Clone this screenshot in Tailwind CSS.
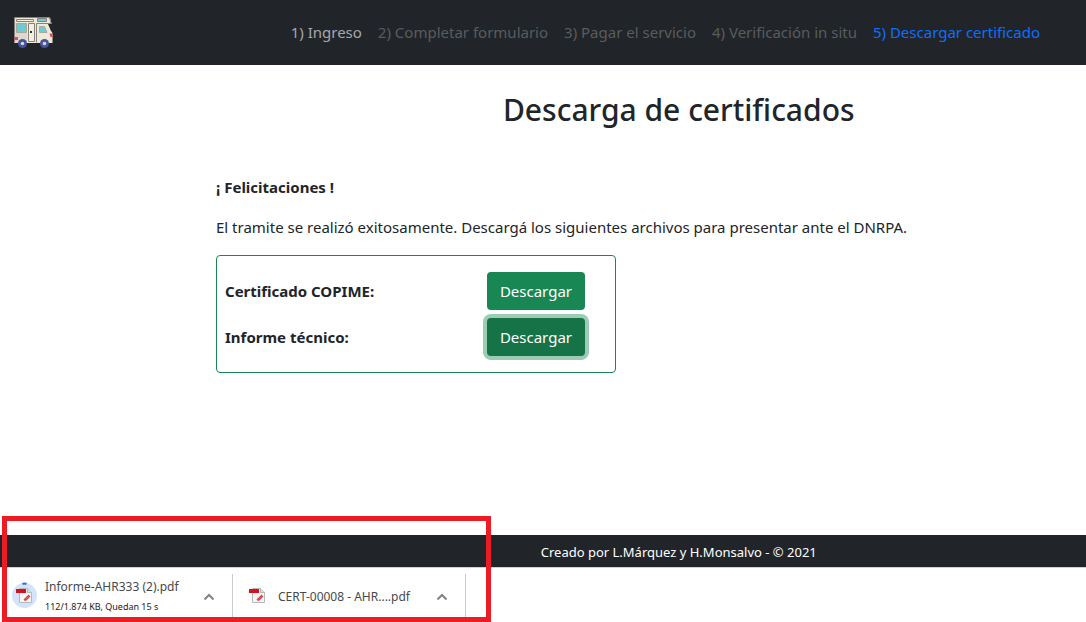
<!DOCTYPE html>
<html lang="es">
<head>
<meta charset="utf-8">
<meta name="viewport" content="width=device-width, initial-scale=1">
<title>Descarga de certificados</title>
<script src="https://cdn.jsdelivr.net/npm/@tailwindcss/browser@4"></script>
</head>
<body class="relative flex min-h-screen flex-col bg-white font-['Noto_Sans',sans-serif] text-[15px] leading-6 text-[#212529]">
  <header class="flex h-[65px] items-center justify-between bg-[#212529] pr-[46px] pb-px pl-[13px]">
    <a href="#" aria-label="Inicio">
      <svg class="h-10 w-[42px]" viewBox="0 -2 42 40">
        <path d="M1 5q0-2 2-2h32q2 0 2.500 2l1 5H35l3 7q1.500 1 1.500 3v9H1z" fill="#efead8"/>
        <path d="M1 9h13v20H1z" fill="#dcd8cc"/>
        <path d="M1.500 28.500V5q0-1.500 1.500-1.500h32q1.500 0 2 1.500l1 4.500H23.500" fill="none" stroke="#85817b"/>
        <path d="M3.500 5.500h17v2h-17z" fill="#f7f2e2" stroke="#85817b"/>
        <path d="M24.500 4.500h9v3h-9z" fill="#6ecbd4" stroke="#85817b"/>
        <path d="M3.500 9.500h10v9h-10z" fill="#6ecbd4" stroke="#aaa69e"/>
        <path d="M15.500 9.500h6v18h-6z" fill="#f4efdf" stroke="#85817b"/>
        <path d="M23.500 9.500v19" stroke="#85817b"/>
        <path d="M17 17h2v2h-2z" fill="#333"/>
        <path d="M26.500 12.500h5l2.500 6h-7.500z" fill="#6ecbd4" stroke="#aaa69e"/>
        <path d="M1 23h4v3H1zM36.500 19.500h3V23h-2z" fill="#e34b5b"/>
        <circle cx="9.500" cy="29.500" r="4.500" fill="#46529a"/><circle cx="9.500" cy="29.500" r="1.800" fill="#d8d5c8"/>
        <circle cx="31.500" cy="29.500" r="4.500" fill="#46529a"/><circle cx="31.500" cy="29.500" r="1.800" fill="#d8d5c8"/>
      </svg>
    </a>
    <nav class="flex items-center gap-4 whitespace-nowrap text-[#595c5f]">
      <a href="#" class="text-[#a6a8a9]">1) Ingreso</a>
      <a href="#">2) Completar formulario</a>
      <a href="#">3) Pagar el servicio</a>
      <a href="#">4) Verificación in situ</a>
      <a href="#" class="text-[#0d6efd]">5) Descargar certificado</a>
    </nav>
  </header>

  <main class="flex-1 pt-6">
    <h1 class="ml-[25%] text-center text-3xl leading-[42px] font-medium">Descarga de certificados</h1>
    <div class="ml-[216px] pt-11">
      <p class="font-bold">¡ Felicitaciones !</p>
      <p class="mt-4">El tramite se realizó exitosamente. Descargá los siguientes archivos para presentar ante el DNRPA.</p>
      <section class="mt-4 flex max-w-[400px] flex-col gap-2 rounded border border-[#198754] py-4 pr-[30px] pl-2">
        <div class="flex items-center justify-between">
          <span id="cert" class="font-bold">Certificado COPIME:</span>
          <button type="button" aria-describedby="cert" class="h-[38px] rounded bg-[#198754] px-[13px] text-white">Descargar</button>
        </div>
        <div class="flex items-center justify-between">
          <span id="informe" class="font-bold">Informe técnico:</span>
          <button type="button" aria-describedby="informe" class="h-[38px] rounded bg-[#157347] px-[13px] text-white ring-4 ring-[#9dccb5]">Descargar</button>
        </div>
      </section>
    </div>
  </main>

  <footer class="h-8 bg-[#212529]">
    <p class="ml-[25%] text-center text-[13px] leading-[34px] text-white">Creado por L.Márquez y H.Monsalvo - © 2021</p>
  </footer>

  <aside class="flex h-[55px] border-t border-[#d0d2d4] pt-1.5 pb-[3px] text-xs text-[#46494d]" aria-label="Descargas">
    <div class="flex w-[233px] items-center border-r border-[#c9cbce] pr-[17px] pl-3">
      <svg class="mb-1 size-[26px] shrink-0" viewBox="0 0 26 26">
        <circle cx="12.500" cy="13.500" r="12.500" fill="#d3e3fc"/>
        <path d="M10.500 2q2-1 4 0" fill="none" stroke="#1a73e8" stroke-width="2"/>
        <path d="M7.500 6.500h8l4 4v10h-12z" fill="#f5f5f5" stroke="#b8b8b8"/>
        <path d="M15.500 6.500v4h4" fill="#ddd" stroke="#b8b8b8"/>
        <path d="M4 7h10v4H4z" fill="#d3131b"/>
        <path d="m12 18 5-5M14 18l4-4M12 18h2" fill="none" stroke="#d9444a" stroke-width="1.300"/>
      </svg>
      <div class="ml-[7px] flex-1 whitespace-nowrap">
        <p class="leading-5">Informe-AHR333 (2).pdf</p>
        <p class="text-[9px] leading-5 text-[#222]">112/1.874 KB, Quedan 15 s</p>
      </div>
      <button type="button" aria-label="Opciones de Informe-AHR333"><svg class="h-2 w-3" viewBox="0 0 12 8"><path d="m1.500 6.500 4.500-4.500 4.500 4.500" fill="none" stroke="#808386" stroke-width="2"/></svg></button>
    </div>
    <div class="flex w-[233px] items-center border-r border-[#c9cbce] pr-[17px] pl-[15px]">
      <svg class="mb-0.5 h-[18px] w-[18px] shrink-0" viewBox="3 5 18 18">
        <path d="M7.500 6.500h8l4 4v10h-12z" fill="#f5f5f5" stroke="#b8b8b8"/>
        <path d="M15.500 6.500v4h4" fill="#ddd" stroke="#b8b8b8"/>
        <path d="M4 7h10v4H4z" fill="#d3131b"/>
        <path d="m12 18 5-5M14 18l4-4M12 18h2" fill="none" stroke="#d9444a" stroke-width="1.300"/>
      </svg>
      <p class="ml-3 flex-1 whitespace-nowrap">CERT-00008 - AHR....pdf</p>
      <button type="button" aria-label="Opciones de CERT-00008"><svg class="h-2 w-3" viewBox="0 0 12 8"><path d="m1.500 6.500 4.500-4.500 4.500 4.500" fill="none" stroke="#808386" stroke-width="2"/></svg></button>
    </div>
  </aside>
  <!-- Highlight around the download bar -->
  <div class="pointer-events-none absolute bottom-0 left-0.5 h-[106px] w-[489px] border-5 border-[#ed1c24]"></div>
</body>
</html>
